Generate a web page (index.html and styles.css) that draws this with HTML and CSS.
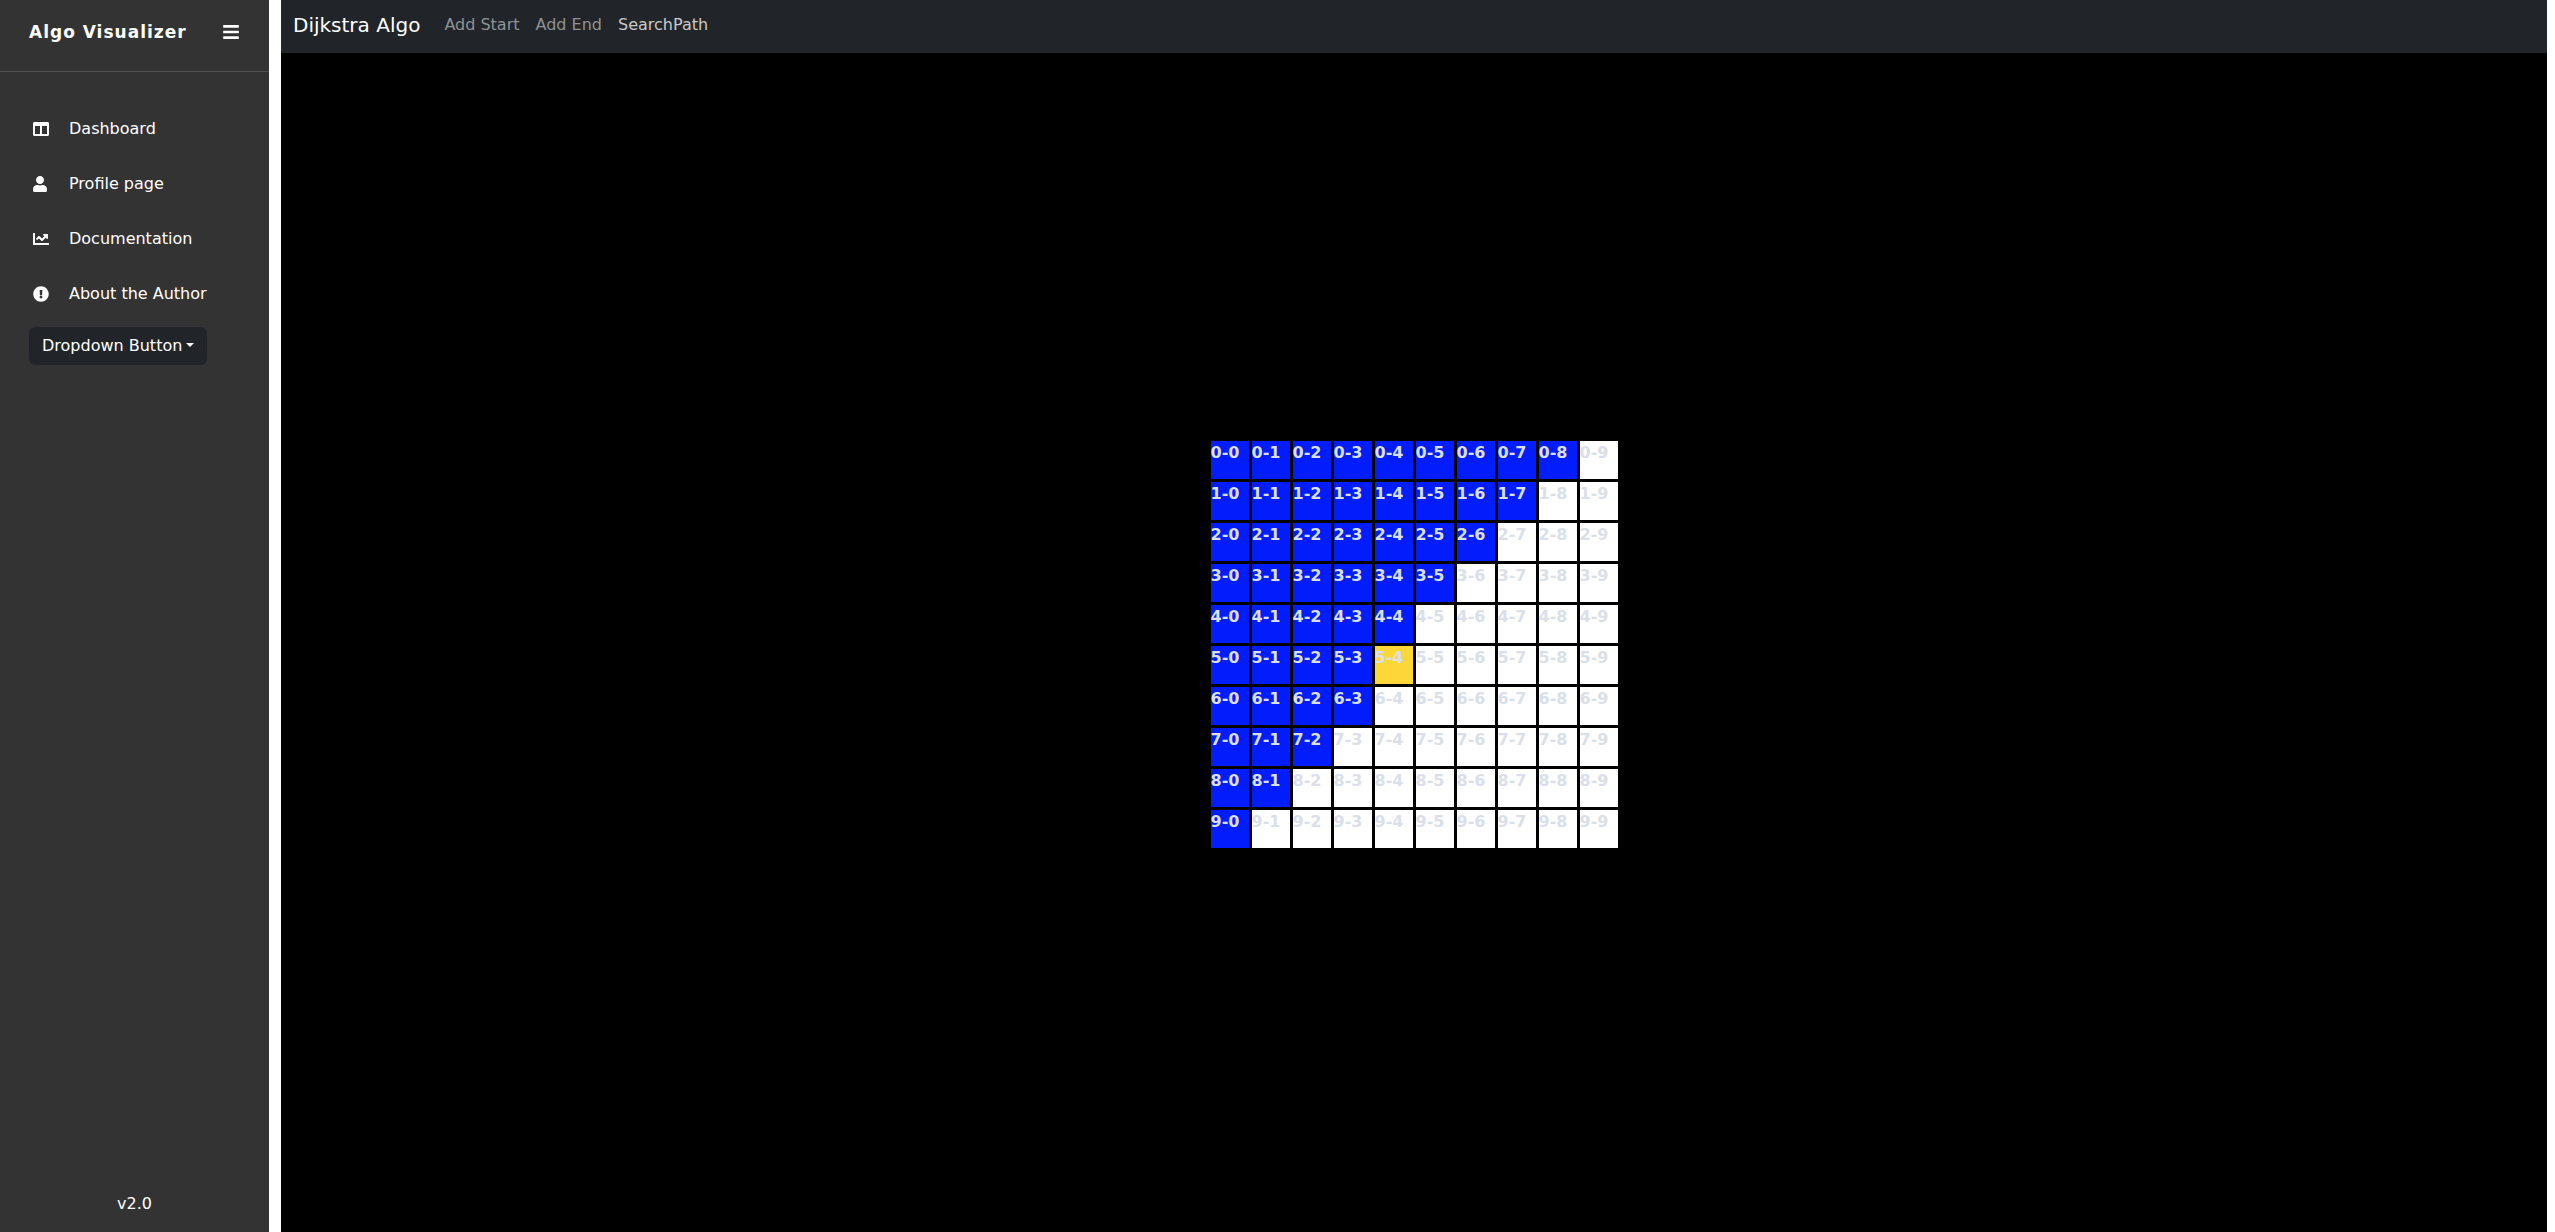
FILE: index.html
```html
<!DOCTYPE html>
<html lang="en">
<head>
<meta charset="utf-8">
<title>Algo Visualizer</title>
<link rel="stylesheet" href="styles.css">
</head>
<body>
<div class="app">
  <aside class="sidebar">
    <header class="sidebar-header">
      <a class="sidebar-title" href="#">Algo Visualizer</a>
      <button class="menu-toggle" type="button" aria-label="Toggle menu">
        <svg class="menu-icon" viewBox="0 0 448 512" aria-hidden="true"><path d="M16 132h416c8.837 0 16-7.163 16-16V76c0-8.837-7.163-16-16-16H16C7.163 60 0 67.163 0 76v40c0 8.837 7.163 16 16 16zm0 160h416c8.837 0 16-7.163 16-16v-40c0-8.837-7.163-16-16-16H16c-8.837 0-16 7.163-16 16v40c0 8.837 7.163 16 16 16zm0 160h416c8.837 0 16-7.163 16-16v-40c0-8.837-7.163-16-16-16H16c-8.837 0-16 7.163-16 16v40c0 8.837 7.163 16 16 16z"/></svg>
      </button>
    </header>
    <nav class="sidebar-nav">
      <a class="sidebar-link" href="#">
        <svg class="icon" viewBox="0 0 512 512" aria-hidden="true"><path d="M464 32H48C21.49 32 0 53.49 0 80v352c0 26.51 21.49 48 48 48h416c26.51 0 48-21.49 48-48V80c0-26.51-21.49-48-48-48zM224 416H64V160h160v256zm224 0H288V160h160v256z"/></svg>
        Dashboard
      </a>
      <a class="sidebar-link" href="#">
        <svg class="icon" viewBox="0 0 512 512" aria-hidden="true"><path d="M224 256c70.7 0 128-57.3 128-128S294.7 0 224 0 96 57.3 96 128s57.3 128 128 128zm89.6 32h-16.7c-22.2 10.2-46.9 16-72.9 16s-50.6-5.8-72.9-16h-16.7C60.2 288 0 348.2 0 422.4V464c0 26.5 21.5 48 48 48h352c26.5 0 48-21.5 48-48v-41.6c0-74.2-60.2-134.4-134.4-134.4z"/></svg>
        Profile page
      </a>
      <a class="sidebar-link" href="#">
        <svg class="icon" viewBox="0 0 512 512" aria-hidden="true"><path d="M496 384H64V80c0-8.84-7.16-16-16-16H16C7.16 64 0 71.16 0 80v336c0 17.67 14.33 32 32 32h464c8.84 0 16-7.16 16-16v-32c0-8.84-7.16-16-16-16zM464 96H345.94c-21.38 0-32.09 25.85-16.97 40.97l32.4 32.4L288 242.75l-73.37-73.37c-12.5-12.5-32.76-12.5-45.25 0l-68.69 68.69c-6.25 6.25-6.25 16.38 0 22.63l22.62 22.62c6.25 6.25 16.38 6.25 22.63 0L192 237.25l73.37 73.37c12.5 12.5 32.76 12.5 45.25 0l96-96 32.4 32.4c15.12 15.12 40.97 4.41 40.97-16.97V112c.01-8.84-7.15-16-15.99-16z"/></svg>
        Documentation
      </a>
      <a class="sidebar-link" href="#">
        <svg class="icon" viewBox="0 0 512 512" aria-hidden="true"><path d="M504 256c0 136.997-111.043 248-248 248S8 392.997 8 256C8 119.083 119.043 8 256 8s248 111.083 248 248zm-248 50c-25.405 0-46 20.595-46 46s20.595 46 46 46 46-20.595 46-46-20.595-46-46-46zm-43.673-165.346l7.418 136c.347 6.364 5.609 11.346 11.982 11.346h48.546c6.373 0 11.635-4.982 11.982-11.346l7.418-136c.375-6.874-5.098-12.654-11.982-12.654h-63.383c-6.884 0-12.356 5.78-11.981 12.654z"/></svg>
        About the Author
      </a>
      <button class="dropdown" type="button" aria-haspopup="true">Dropdown Button</button>
    </nav>
    <footer class="sidebar-footer">v2.0</footer>
  </aside>
  <div class="page">
    <nav class="navbar">
      <a class="brand" href="#">Dijkstra Algo</a>
      <a class="nav-link" href="#">Add Start</a>
      <a class="nav-link" href="#">Add End</a>
      <a class="nav-link nav-link-active" href="#">SearchPath</a>
    </nav>
    <main class="board">
      <div class="grid" id="grid"></div>
    </main>
  </div>
</div>
<script src="app.js"></script>
</body>
</html>
```

FILE: styles.css
```css
* {
  box-sizing: border-box;
}

body {
  margin: 0;
  background: #fff;
  font: 16px/24px "DejaVu Sans", sans-serif;
}

a {
  color: inherit;
  text-decoration: none;
}

button {
  border: 0;
  font: inherit;
  cursor: pointer;
}

.app {
  display: flex;
  gap: 12px;
  min-height: 100vh;
  padding-right: 8px;
}

.sidebar {
  display: flex;
  flex-direction: column;
  flex: 0 0 269px;
  background: #333;
  color: #fff;
}

.sidebar-header {
  display: flex;
  align-items: center;
  justify-content: space-between;
  height: 72px;
  padding: 0 30px 8px 29px;
  border-bottom: 1px solid #505050;
}

.sidebar-title {
  font-size: 17px;
  font-weight: bold;
  letter-spacing: 1px;
}

.menu-toggle {
  display: flex;
  padding: 0;
  background: none;
  color: inherit;
}

.menu-icon {
  width: 16px;
  height: 18px;
  fill: currentColor;
}

.sidebar-nav {
  flex: 1;
  padding: 29px;
}

.sidebar-link {
  display: flex;
  align-items: center;
  gap: 20px;
  height: 55px;
  padding-left: 4px;
}

.icon {
  width: 16px;
  height: 16px;
  fill: currentColor;
}

.dropdown {
  display: flex;
  align-items: center;
  gap: 4px;
  height: 38px;
  margin-top: 6px;
  padding: 0 13px;
  border-radius: 6px;
  background: #212529;
  color: #fff;
  white-space: nowrap;
}

.dropdown::after {
  content: "";
  margin-bottom: 3px;
  border-top: 4px solid;
  border-right: 4px solid transparent;
  border-left: 4px solid transparent;
}

.sidebar-footer {
  padding: 16px;
  text-align: center;
}

.page {
  display: flex;
  flex-direction: column;
  flex: 1;
  background: #000;
}

.navbar {
  display: flex;
  align-items: center;
  height: 53px;
  padding: 0 12px 4px;
  background: #212529;
}

.brand {
  margin-right: 16px;
  color: #fff;
  font-size: 20px;
}

.nav-link {
  padding: 0 8px;
  color: #909294;
}

.nav-link-active {
  color: #c8c9ca;
}

.board {
  display: flex;
  align-items: center;
  justify-content: center;
  flex: 1;
  padding-top: 4px;
}

.grid {
  display: grid;
  grid-template-columns: repeat(10, 38px);
  grid-auto-rows: 38px;
  gap: 3px;
}

.cell {
  background: #fff;
  color: #dadfea;
  font-weight: bold;
}

.cell-visited {
  background: #021dfb;
}

.cell-target {
  background: #fbd837;
}
```

FILE: app.js
```js
// Number of visited cells at the left of each row.
const visited = [9, 8, 7, 6, 5, 4, 4, 3, 2, 1];
const target = "5-4";
const grid = document.getElementById("grid");

visited.forEach((count, row) => {
  for (let col = 0; col < 10; col++) {
    const cell = document.createElement("div");
    const name = row + "-" + col;
    cell.className = "cell";
    if (col < count) cell.classList.add("cell-visited");
    if (name === target) cell.classList.add("cell-target");
    cell.textContent = name;
    grid.appendChild(cell);
  }
});
```
